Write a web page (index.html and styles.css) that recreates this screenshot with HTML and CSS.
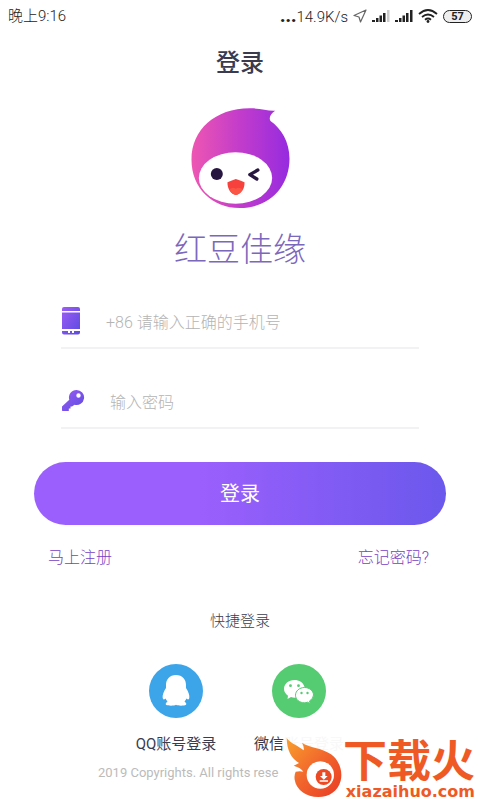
FILE: index.html
```
<!DOCTYPE html>
<html lang="zh-CN">

<head>
    <meta charset="UTF-8">
    <meta name="viewport" content="width=device-width, initial-scale=1.0">
    <title>登录</title>
    <link rel="stylesheet" href="styles.css">
</head>

<body>
    <div class="status-bar">
        <span>晚上9:16</span>
        <div class="status-right">
            <span><b>...</b>14.9K/s</span>
            <svg width="14" height="14" viewBox="0 0 14 14">
                <path d="M13 1L1 6.500l5 1.500 1.500 5z" fill="none" stroke="#666" stroke-width="1.200" stroke-linejoin="round" />
            </svg>
            <svg class="signal" width="18" height="14" viewBox="0 0 18 14">
                <path d="M0 13v-2h3v2zM4 13V9h2.500v4zM7.500 13V6.500H10V13zM11 13V4h2.500v9z" fill="#222" />
                <path d="M15 13V1h2.500v12z" fill="#ccc" />
            </svg>
            <svg class="signal" width="18" height="14" viewBox="0 0 18 14">
                <path d="M0 13v-2h3v2zM4 13V9h2.500v4zM7.500 13V6.500H10V13zM11 13V4h2.500v9zM15 13V1h2.500v12z" fill="#222" />
            </svg>
            <svg class="wifi" width="20" height="14" viewBox="0 0 20 14">
                <path d="M1 5q9-8 18 0M4 8q6-5 12 0M7 10.800q3-2.500 6 0" fill="none" stroke="#222" stroke-width="1.800" />
                <circle cx="10" cy="12.500" r="1.400" fill="#222" />
            </svg>
            <span class="battery">57</span>
        </div>
    </div>

    <main>
        <h1>登录</h1>

        <div class="brand">
            <svg class="logo" viewBox="62 40 296 300">
                <defs>
                    <linearGradient id="drop" x1="0" y1="0" x2="1" y2="0">
                        <stop offset="0" stop-color="#ee56b2" />
                        <stop offset=".5" stop-color="#c23ccb" />
                        <stop offset="1" stop-color="#962be0" />
                    </linearGradient>
                </defs>
                <path d="M314 48C300 57 294 70 300 79C332 101 357 142 357 192C357 277 295 340 208 340C125 340 63 280 63 195C63 105 135 40 240 41C270 41 290 49 314 48Z" fill="url(#drop)" />
                <ellipse cx="195" cy="250" rx="110" ry="77" fill="#fff" />
                <circle cx="139" cy="238" r="18" fill="#271640" />
                <path d="M262 226L238 240L259 253" fill="none" stroke="#271640" stroke-width="10" stroke-linecap="round" stroke-linejoin="round" />
                <path d="M171 263Q185 257 196 253Q209 257 222 263C223 284 210 300 196 301C182 300 170 283 171 263Z" fill="#f6413c" />
                <path d="M177 284Q186 275 196 282Q207 275 217 284Q208 300 196 301Q184 299 177 284Z" fill="#fb5545" />
            </svg>
            <p class="brand-name">红豆佳缘</p>
        </div>

        <form id="login-form">
            <div class="field">
                <label for="phone" aria-label="手机号">
                    <svg width="20" height="28" viewBox="0 0 20 28">
                        <defs>
                            <linearGradient id="violet" x1="0" y1="0" x2="1" y2="1">
                                <stop offset="0" stop-color="#9d5cf5" />
                                <stop offset="1" stop-color="#5a4be0" />
                            </linearGradient>
                        </defs>
                        <path d="M1 4V2q0-2 2-2h14q2 0 2 2v2zM1 5.500h18V22H1zM1 24h6v2h2v-2h2v2h2v-2h6v1.500q0 2-2 2H3q-2 0-2-2z" fill="url(#violet)" />
                    </svg>
                </label>
                <input type="tel" id="phone" placeholder="+86 请输入正确的手机号">
            </div>
            <div class="field">
                <label for="password" aria-label="密码">
                    <svg width="24" height="24" viewBox="0 0 24 24">
                        <path fill-rule="evenodd" d="M15.500 1a7.500 7.500 0 1 1-2 14.700L11 17.500H9.500V19.500H7.800v2.500H1.500l-.5-.5V17.500l7.300-6.700A7.500 7.500 0 0 1 15.500 1zM17.500 4.300a2.200 2.200 0 1 0 0 4.400a2.200 2.200 0 0 0 0-4.400z" fill="url(#violet)" />
                    </svg>
                </label>
                <input type="password" id="password" placeholder="输入密码">
            </div>
            <button type="submit" class="btn">登录</button>
        </form>

        <div class="links">
            <a href="#register">马上注册</a>
            <a href="#forgot">忘记密码?</a>
        </div>

        <h2>快捷登录</h2>
        <div class="social">
            <a href="#qq">
                <svg width="54" height="54" viewBox="0 0 54 54">
                    <circle cx="27" cy="27" r="27" fill="#3ca5e9" />
                    <path d="M27 11C20.500 11 17 15.500 17 21V24C14.500 28 13.300 31 13.700 34Q14.200 36.500 16.500 34.500Q17.500 36.500 18.500 37.500Q16 39.500 17 40.800C19 42 25 42 27 40.800C29 42 35 42 37 40.800Q38 39.500 35.500 37.500Q36.500 36.500 37.500 34.500Q39.800 36.500 40.300 34C40.700 31 39.500 28 37 24V21C37 15.500 33.500 11 27 11Z" fill="#fff" />
                </svg>
                <span>QQ账号登录</span>
            </a>
            <a href="#wechat">
                <svg width="54" height="54" viewBox="0 0 54 54">
                    <circle cx="27" cy="27" r="27" fill="#55cb72" />
                    <path d="M22.500 16C16.500 16 12 20 12 24.800Q12 29 16 31.700L15.500 35L19 33Q22 34 25 33.400C33 33 34 28 32.500 23C31.500 18.500 27 16 22.500 16Z" fill="#fff" />
                    <path d="M32.500 23.500C27.500 23.500 23.500 27 23.500 31.200C23.500 35.500 27.500 38.800 32.500 38.800Q34 38.800 35.500 38.200L38.300 39.700L37.500 37Q41.500 34.500 41.500 31C41.500 27 37.500 23.500 32.500 23.500Z" fill="#fff" stroke="#55cb72" />
                    <g fill="#55cb72">
                        <circle cx="18.500" cy="21.700" r="1.400" />
                        <circle cx="26.500" cy="21.700" r="1.400" />
                        <circle cx="29.500" cy="29" r="1.200" />
                        <circle cx="35.500" cy="29" r="1.200" />
                    </g>
                </svg>
                <span>微信<span class="faded">账号登录</span></span>
            </a>
        </div>
    </main>

    <footer>2019 Copyrights. All rights rese</footer>

    <div class="watermark">
        <svg width="58" height="62" viewBox="40 35 174 186">
            <defs>
                <linearGradient id="flame" x1="0" y1="0" x2="1" y2="1">
                    <stop offset="0" stop-color="#f9a02c" />
                    <stop offset=".5" stop-color="#f2662c" />
                    <stop offset="1" stop-color="#e93a24" />
                </linearGradient>
            </defs>
            <path d="M45 38C58 55 79 61 96 75Q98 65 91 52C112 68 150 66 178 87C203 105 214 138 207 166C199 197 172 215 140 215C104 215 74 194 69 163Q67 149 72 139Q85 136 95 139Q88 127 66 121Q76 117 82 113C58 98 46 75 45 38Z" fill="url(#flame)" />
            <circle cx="146" cy="149" r="41" fill="#fff" />
            <circle cx="156" cy="155" r="24" fill="#ec4a25" />
            <path d="M152 141h9v11h7l-11.500 11l-11.500-11h7zM144 165h25v4h-25z" fill="#fff" />
        </svg>
        <div class="watermark-text">
            <strong>下载火</strong>
            <span>xiazaihuo.com</span>
        </div>
    </div>

    <script>
        document.getElementById('login-form').addEventListener('submit', e => e.preventDefault());
    </script>
</body>

</html>
```
FILE: styles.css
```
/* General Reset */
* {
    margin: 0;
    padding: 0;
    box-sizing: border-box;
}

body {
    position: relative;
    min-height: 100vh;
    background: #fff;
    color: #3b3b4d;
    font-family: Roboto, 'Noto Sans CJK SC', sans-serif;
    font-size: 15px;
    line-height: 24px;
}

svg {
    display: block;
}

a {
    text-decoration: none;
}

/* Status bar */
.status-bar {
    display: flex;
    justify-content: space-between;
    align-items: center;
    height: 32px;
    padding: 0 8px;
    color: #222;
    font-weight: 300;
}

.status-right {
    display: flex;
    align-items: center;
    gap: 5px;
}

.status-right b {
    font-size: 18px;
    font-weight: 900;
}

.battery {
    width: 29px;
    height: 13px;
    border: 1px solid #222;
    border-radius: 7px;
    background: #eee;
    font-size: 11px;
    font-weight: 700;
    line-height: 11px;
    text-align: center;
}

h1 {
    margin-top: 15px;
    font-size: 24px;
    font-weight: 500;
    line-height: 32px;
    text-align: center;
}

/* Logo */
.brand {
    display: flex;
    flex-direction: column;
    align-items: center;
    margin-top: 29px;
}

.logo {
    width: 99px;
    height: 100px;
}

.brand-name {
    margin-top: 22px;
    color: #7b68bd;
    font-size: 33px;
    font-weight: 300;
    line-height: 40px;
}

/* Form */
form {
    display: flex;
    flex-direction: column;
    gap: 26px;
    margin-top: 25px;
    padding: 0 34px;
}

.field {
    display: flex;
    align-items: center;
    height: 54px;
    margin: 0 27px;
    border-bottom: 2px solid #f2f2f4;
}

.field label {
    width: 45px;
}

.field input {
    flex: 1;
    min-width: 0;
    padding-top: 4px;
    border: none;
    outline: none;
    background: none;
    font: inherit;
    font-size: 16px;
    font-weight: 300;
}

.field #password {
    padding-left: 4px;
}

.field input::placeholder {
    color: #b4b4b4;
}

.btn {
    height: 63px;
    margin-top: 7px;
    border: none;
    border-radius: 32px;
    background: linear-gradient(90deg, #9b5ffd 40%, #6b58ec);
    color: #fff;
    font: inherit;
    font-size: 20px;
    cursor: pointer;
}

.links {
    display: flex;
    justify-content: space-between;
    margin-top: 21px;
    padding: 0 51px 0 48px;
    font-size: 16px;
    font-weight: 300;
}

.links a {
    color: #7a3fc4;
}

/* Quick login */
h2 {
    margin-top: 39px;
    font-size: 15px;
    font-weight: 300;
    text-align: center;
}

.social {
    display: flex;
    justify-content: center;
    gap: 33px;
    margin-top: 31px;
    padding-right: 5px;
}

.social a {
    display: flex;
    flex-direction: column;
    align-items: center;
    gap: 14px;
    width: 90px;
    color: #3b3b4d;
    white-space: nowrap;
}

.faded {
    color: #f8f8f8;
}

footer {
    margin-top: 5px;
    padding-left: 98px;
    color: #bbb;
    font-size: 13px;
}

/* Site mark over the bottom right corner */
.watermark {
    position: absolute;
    right: 5px;
    bottom: 1px;
    display: flex;
    align-items: flex-end;
    color: #ef5a24;
}

.watermark-text {
    display: flex;
    flex-direction: column;
    align-items: flex-end;
}

.watermark strong {
    font-size: 44px;
    font-weight: 700;
    line-height: 46px;
}

.watermark span {
    font-family: 'DejaVu Sans', sans-serif;
    font-size: 16px;
    font-weight: 700;
    line-height: 14px;
}
```
